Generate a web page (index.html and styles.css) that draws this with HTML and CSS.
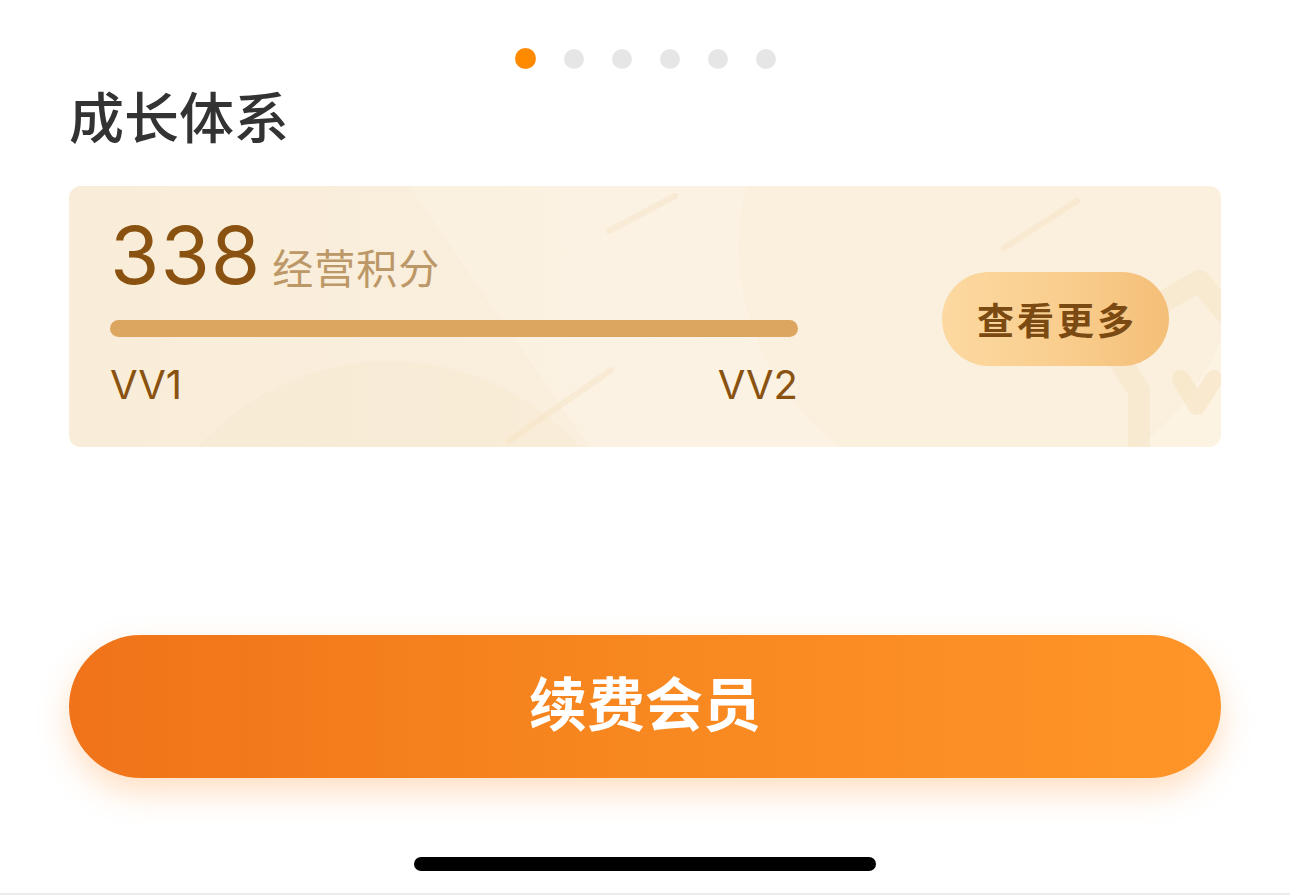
FILE: index.html
```html
<!DOCTYPE html>
<html lang="zh-CN">
<head>
<meta charset="utf-8">
<title>成长体系</title>
<link rel="stylesheet" href="styles.css">
</head>
<body>
<div class="page">
  <div class="dots">
    <span class="dot active"></span>
    <span class="dot"></span>
    <span class="dot"></span>
    <span class="dot"></span>
    <span class="dot"></span>
    <span class="dot"></span>
  </div>
  <h1 class="title">成长体系</h1>
  <div class="card">
    <svg class="decor" width="1152" height="261" viewBox="0 0 1152 261">
      <circle cx="920" cy="60" r="250" fill="#F8E6C8" opacity="0.22"/>
      <circle cx="320" cy="430" r="255" fill="#F8E4C4" opacity="0.22"/>
      <path d="M0 0 L340 0 L520 261 L0 261 Z" fill="#F9E9CF" opacity="0.25"/>
      <line x1="540" y1="45" x2="606" y2="10" stroke="#F6E2C2" stroke-width="6" stroke-linecap="round" opacity="0.45"/>
      <line x1="440" y1="255" x2="542" y2="184" stroke="#F6E2C2" stroke-width="6" stroke-linecap="round" opacity="0.45"/>
      <line x1="935" y1="62" x2="1008" y2="15" stroke="#F6E2C2" stroke-width="6" stroke-linecap="round" opacity="0.45"/>
      <path d="M1070 261 L1070 205 L1035 150 L1130 95 L1160 130" fill="none" stroke="#F6E4C6" stroke-width="22" stroke-linejoin="round" opacity="0.55"/>
      <path d="M1112 193 L1128 220 L1145 193" fill="none" stroke="#F6E2C2" stroke-width="18" stroke-linecap="round" stroke-linejoin="round" opacity="0.6"/>
    </svg>
    <div class="card-left">
      <div class="score">
        <span class="num">338</span>
        <span class="unit">经营积分</span>
      </div>
      <div class="bar"></div>
      <div class="levels">
        <span>VV1</span>
        <span>VV2</span>
      </div>
    </div>
    <div class="more">查看更多</div>
  </div>
  <div class="spacer"></div>
  <div class="renew">续费会员</div>
  <div class="home-indicator"></div>
</div>
</body>
</html>
```

FILE: styles.css
```css
* { box-sizing: border-box; }
html, body {
  margin: 0;
  padding: 0;
  background: #ffffff;
}
body {
  font-family: "Noto Sans CJK SC", "Noto Sans", sans-serif;
}
.page {
  width: 1290px;
  height: 895px;
  padding: 0 69px;
  display: flex;
  flex-direction: column;
  border-bottom: 2px solid #ECECEC;
  overflow: hidden;
}
.dots {
  margin-top: 48px;
  display: flex;
  justify-content: center;
  gap: 28px;
  height: 21px;
  align-items: center;
}
.dot {
  width: 20px;
  height: 20px;
  border-radius: 50%;
  background: #E6E6E6;
}
.dot.active {
  width: 21px;
  height: 21px;
  background: #FF8A00;
}
.title {
  margin: 14px 0 0 0;
  font-size: 55px;
  line-height: 62px;
  font-weight: 500;
  color: #333333;
  letter-spacing: 0px;
}
.card {
  position: relative;
  margin-top: 41px;
  height: 261px;
  border-radius: 12px;
  background: linear-gradient(90deg, #FAEFDC 0%, #FBF2E3 50%, #FCF3E3 100%);
  display: flex;
  align-items: center;
  justify-content: space-between;
  padding: 0 52px 0 41px;
  overflow: hidden;
}
.decor {
  position: absolute;
  left: 0;
  top: 0;
}
.card-left {
  position: relative;
  width: 688px;
  align-self: flex-start;
  padding-top: 22px;
}
.score {
  display: flex;
  align-items: baseline;
  height: 92px;
}
.num {
  font-family: Inter, "Liberation Sans", sans-serif;
  font-size: 80px;
  line-height: 94px;
  color: #8A5210;
  font-weight: 400;
  letter-spacing: 1px;
}
.unit {
  margin-left: 11px;
  font-size: 41px;
  letter-spacing: 1px;
  color: #BC9767;
}
.bar {
  margin-top: 20px;
  height: 17px;
  border-radius: 9px;
  background: #DDA660;
}
.levels {
  margin-top: 23px;
  display: flex;
  justify-content: space-between;
  font-family: Inter, "Liberation Sans", sans-serif;
  font-size: 40px;
  line-height: 50px;
  color: #8A5210;
}
.more {
  position: relative;
  width: 227px;
  height: 94px;
  margin-top: 4px;
  border-radius: 47px;
  background: linear-gradient(90deg, #FCD9A1 0%, #F9CD8D 55%, #F4BF78 100%);
  display: flex;
  align-items: center;
  justify-content: center;
  font-size: 37px;
  font-weight: 700;
  color: #7B4A13;
  letter-spacing: 3px;
  padding-left: 3px;
}
.spacer {
  height: 188px;
  flex: none;
}
.renew {
  height: 143px;
  border-radius: 72px;
  background: linear-gradient(90deg, #F07319 0%, #F7861F 45%, #FF9529 100%);
  box-shadow: 0 14px 32px rgba(255, 140, 40, 0.28);
  display: flex;
  align-items: center;
  justify-content: center;
  padding-bottom: 12px;
  font-size: 58px;
  font-weight: 700;
  color: #ffffff;
  letter-spacing: 0;
}
.home-indicator {
  margin: 79px auto 0 auto;
  width: 462px;
  height: 14px;
  border-radius: 7px;
  background: #000000;
}
```
